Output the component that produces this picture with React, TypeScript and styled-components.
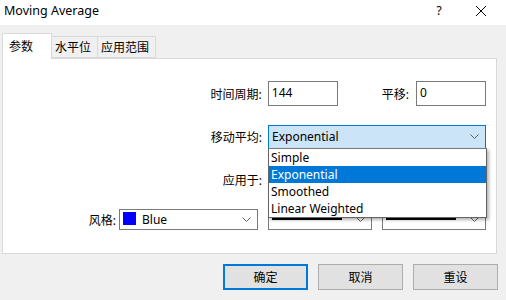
import React from 'react'
import styled, { createGlobalStyle } from 'styled-components'

const GlobalStyle = createGlobalStyle`
    html, body {
        margin: 0;
        padding: 0;
        background: #f0f0f0;
    }
    * {
        box-sizing: border-box;
    }
`

const font = `"Noto Sans", "Noto Sans CJK SC", sans-serif`

const Window = styled.div`
    width: 506px;
    height: 300px;
    background: #f0f0f0;
    font-family: ${font};
    font-size: 12px;
    color: #000;
    display: flex;
    flex-direction: column;
    overflow: hidden;
`
const TitleBar = styled.div`
    height: 25px;
    background: #fff;
    display: flex;
    align-items: center;
    padding-left: 4px;
    padding-bottom: 4px;
`
const Title = styled.div`
    flex: 1;
    font-size: 12.5px;
`
const HelpMark = styled.div`
    width: 20px;
    text-align: center;
    font-size: 12px;
    margin-right: 26px;
`
const CloseMark = styled.div`
    width: 12px;
    height: 12px;
    margin-right: 19px;
    display: flex;
`
const Body = styled.div`
    padding: 7px 9px 0 2px;
`
const TabStrip = styled.div`
    display: flex;
    align-items: flex-end;
    height: 26px;
    position: relative;
    z-index: 1;
`
const Tab = styled.div<{ $active?: boolean; $w: number }>`
    width: ${(p) => p.$w}px;
    height: ${(p) => (p.$active ? 26 : 22)}px;
    margin-bottom: ${(p) => (p.$active ? -1 : 0)}px;
    background: ${(p) => (p.$active ? '#fff' : '#f0f0f0')};
    border: 1px solid #d9d9d9;
    border-bottom: ${(p) => (p.$active ? 'none' : '1px solid #d9d9d9')};
    border-left: ${(p) => (p.$active ? '1px solid #d9d9d9' : 'none')};
    padding-left: ${(p) => (p.$active ? 6 : 3)}px;
    display: flex;
    align-items: center;
    padding-bottom: ${(p) => (p.$active ? 2 : 0)}px;
`
const Panel = styled.div`
    height: 196px;
    background: #fff;
    border: 1px solid #d9d9d9;
    padding: 22px 10px 0 0;
    display: flex;
    flex-direction: column;
`
const Row = styled.div<{ $h: number; $gap: number }>`
    height: ${(p) => p.$h}px;
    margin-top: ${(p) => p.$gap}px;
    display: flex;
    justify-content: flex-end;
    align-items: center;
`
const Label = styled.span<{ $space: number; $lead?: number }>`
    margin-right: ${(p) => p.$space}px;
    margin-left: ${(p) => p.$lead ?? 0}px;
    white-space: nowrap;
`
const Field = styled.div<{ $w: number }>`
    width: ${(p) => p.$w}px;
    height: 100%;
    border: 1px solid #7a7a7a;
    padding: 0 0 3px 3px;
    display: flex;
    align-items: center;
`
const Combo = styled.div<{ $w: number; $focused?: boolean; $lead?: number }>`
    position: relative;
    width: ${(p) => p.$w}px;
    height: 100%;
    margin-left: ${(p) => p.$lead ?? 0}px;
    border: 1px solid ${(p) => (p.$focused ? '#0078d7' : '#7a7a7a')};
    background: ${(p) => (p.$focused ? '#cce4f7' : '#fff')};
    display: flex;
    align-items: center;
    justify-content: flex-end;
    padding: 0 6px 1px 3px;
    gap: 6px;
`
const ComboText = styled.span`
    flex: 1;
`
const Swatch = styled.span`
    width: 13px;
    height: 13px;
    background: #0000ff;
    margin-bottom: 1px;
`
const LinePreview = styled.span<{ $thick: number }>`
    flex: 1;
    height: ${(p) => p.$thick}px;
    background: #000;
    margin-right: 8px;
`
const DropList = styled.div`
    position: absolute;
    top: 100%;
    left: -1px;
    width: 219px;
    border: 1px solid #646464;
    border-top: 1px solid #7a7a7a;
    background: #fff;
    box-shadow: 2px 2px 3px rgba(0, 0, 0, 0.3);
    z-index: 5;
`
const DropItem = styled.div<{ $selected?: boolean }>`
    height: 17px;
    padding-left: 2px;
    display: flex;
    align-items: center;
    background: ${(p) => (p.$selected ? '#0078d7' : '#fff')};
    color: ${(p) => (p.$selected ? '#fff' : '#000')};
`
const ButtonBar = styled.div`
    display: flex;
    justify-content: flex-end;
    gap: 10px;
    margin-right: -1px;
    margin-top: 10px;
`
const Button = styled.div<{ $primary?: boolean }>`
    width: 85px;
    height: 26px;
    background: #e1e1e1;
    border: ${(p) => (p.$primary ? '2px solid #0078d7' : '1px solid #adadad')};
    display: flex;
    align-items: center;
    justify-content: center;
    padding-bottom: 1px;
`

const Chevron = () => (
    <svg width="9" height="5" viewBox="0 0 9 5">
        <path d="M0.5 0.5 L4.5 4.5 L8.5 0.5" fill="none" stroke="#606060" strokeWidth="1" />
    </svg>
)

const items = ['Simple', 'Exponential', 'Smoothed', 'Linear Weighted']

export default function App() {
    return (
        <>
            <GlobalStyle />
            <Window>
                <TitleBar>
                    <Title>Moving Average</Title>
                    <HelpMark>?</HelpMark>
                    <CloseMark>
                        <svg width="12" height="12" viewBox="0 0 12 12">
                            <path d="M1 1 L11 11 M11 1 L1 11" stroke="#000" strokeWidth="1" />
                        </svg>
                    </CloseMark>
                </TitleBar>
                <Body>
                    <TabStrip>
                        <Tab $active $w={50}>参数</Tab>
                        <Tab $w={46}>水平位</Tab>
                        <Tab $w={58}>应用范围</Tab>
                    </TabStrip>
                    <Panel>
                        <Row $h={25} $gap={0}>
                            <Label $space={6}>时间周期:</Label>
                            <Field $w={70}>144</Field>
                            <Label $space={7} $lead={44}>平移:</Label>
                            <Field $w={70}>0</Field>
                        </Row>
                        <Row $h={24} $gap={19}>
                            <Label $space={6}>移动平均:</Label>
                            <Combo $w={218} $focused>
                                <ComboText>Exponential</ComboText>
                                <Chevron />
                                <DropList>
                                    {items.map((it) => (
                                        <DropItem key={it} $selected={it === 'Exponential'}>
                                            {it}
                                        </DropItem>
                                    ))}
                                </DropList>
                            </Combo>
                        </Row>
                        <Row $h={23} $gap={19}>
                            <Label $space={6}>应用于:</Label>
                            <Combo $w={218}>
                                <Chevron />
                            </Combo>
                        </Row>
                        <Row $h={21} $gap={18}>
                            <Label $space={3}>风格:</Label>
                            <Combo $w={139}>
                                <Swatch />
                                <ComboText>Blue</ComboText>
                                <Chevron />
                            </Combo>
                            <Combo $w={104} $lead={10}>
                                <LinePreview $thick={2} />
                                <Chevron />
                            </Combo>
                            <Combo $w={104} $lead={10}>
                                <LinePreview $thick={2} />
                                <Chevron />
                            </Combo>
                        </Row>
                    </Panel>
                    <ButtonBar>
                        <Button $primary>确定</Button>
                        <Button>取消</Button>
                        <Button>重设</Button>
                    </ButtonBar>
                </Body>
            </Window>
        </>
    )
}
